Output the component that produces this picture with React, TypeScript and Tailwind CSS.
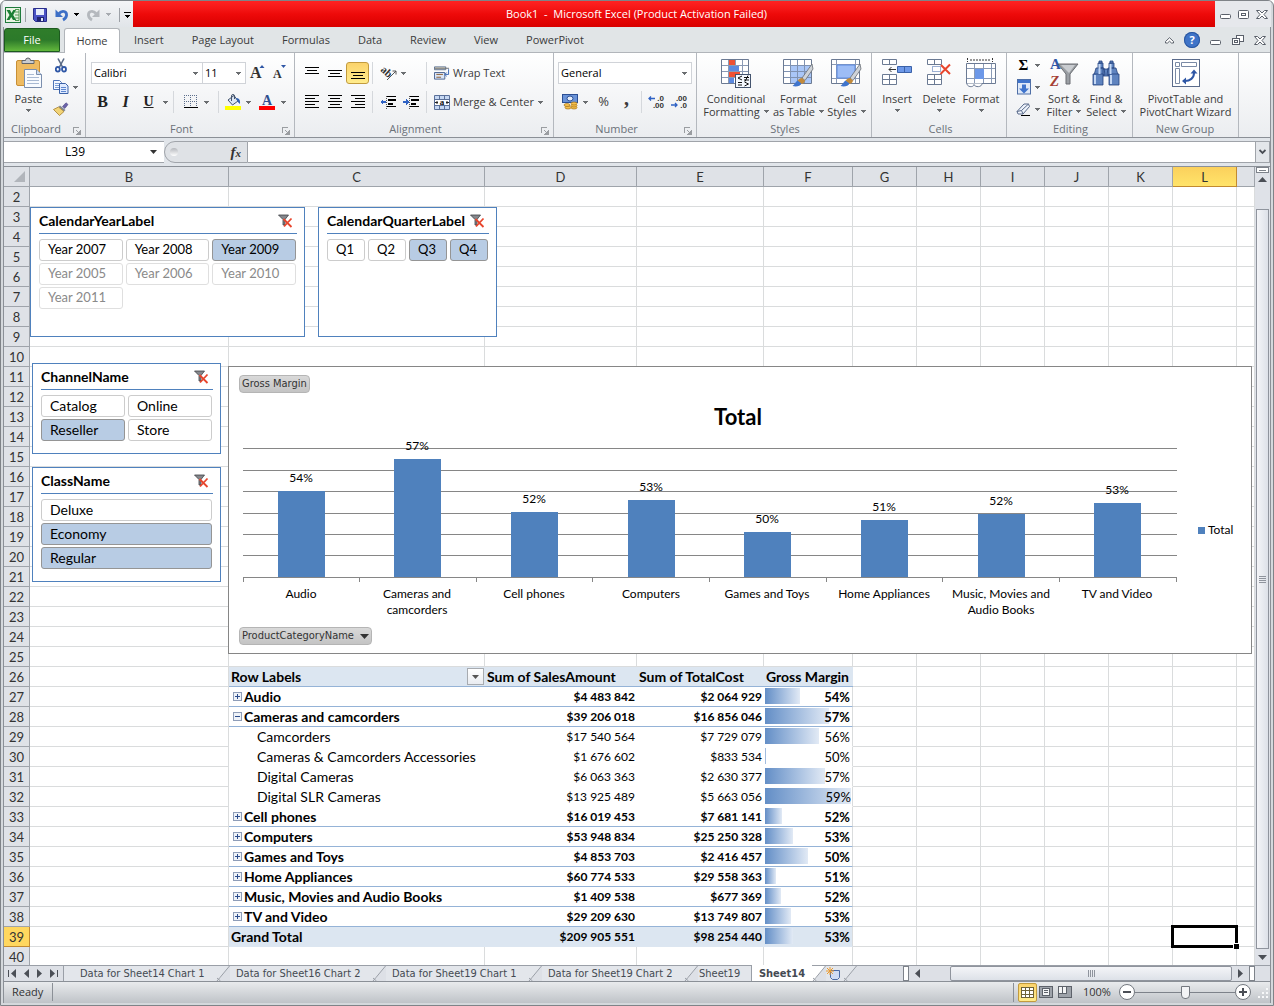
import React from 'react';

const UI = 'font-["Open_Sans","Noto_Sans",sans-serif]';
const SHEET = 'font-[Lato,"Open_Sans",sans-serif]';
const TAHOMA = 'font-["DejaVu_Sans_Condensed","DejaVu_Sans",sans-serif]';

/* ---------- data ---------- */

const columns = [
  { name: 'B', width: 'w-[199px]' },
  { name: 'C', width: 'w-[256px]' },
  { name: 'D', width: 'w-[152px]' },
  { name: 'E', width: 'w-[127px]' },
  { name: 'F', width: 'w-[89px]' },
  { name: 'G', width: 'w-[64px]' },
  { name: 'H', width: 'w-[64px]' },
  { name: 'I', width: 'w-[64px]' },
  { name: 'J', width: 'w-[64px]' },
  { name: 'K', width: 'w-[64px]' },
  { name: 'L', width: 'w-[64px]' },
  { name: '', width: '' },
];

interface PivotRow {
  label: string;
  sales: string;
  cost: string;
  margin: string;
  bar: number;
  kind: 'closed' | 'open' | 'detail' | 'total';
}

const pivot: Record<number, PivotRow> = {
  27: { label: 'Audio', sales: '$4 483 842', cost: '$2 064 929', margin: '54%', bar: 35, kind: 'closed' },
  28: { label: 'Cameras and camcorders', sales: '$39 206 018', cost: '$16 856 046', margin: '57%', bar: 64, kind: 'open' },
  29: { label: 'Camcorders', sales: '$17 540 564', cost: '$7 729 079', margin: '56%', bar: 54, kind: 'detail' },
  30: { label: 'Cameras & Camcorders Accessories', sales: '$1 676 602', cost: '$833 534', margin: '50%', bar: 1, kind: 'detail' },
  31: { label: 'Digital Cameras', sales: '$6 063 363', cost: '$2 630 377', margin: '57%', bar: 60, kind: 'detail' },
  32: { label: 'Digital SLR Cameras', sales: '$13 925 489', cost: '$5 663 056', margin: '59%', bar: 86, kind: 'detail' },
  33: { label: 'Cell phones', sales: '$16 019 453', cost: '$7 681 141', margin: '52%', bar: 17, kind: 'closed' },
  34: { label: 'Computers', sales: '$53 948 834', cost: '$25 250 328', margin: '53%', bar: 28, kind: 'closed' },
  35: { label: 'Games and Toys', sales: '$4 853 703', cost: '$2 416 457', margin: '50%', bar: 43, kind: 'closed' },
  36: { label: 'Home Appliances', sales: '$60 774 533', cost: '$29 558 363', margin: '51%', bar: 11, kind: 'closed' },
  37: { label: 'Music, Movies and Audio Books', sales: '$1 409 538', cost: '$677 369', margin: '52%', bar: 16, kind: 'closed' },
  38: { label: 'TV and Video', sales: '$29 209 630', cost: '$13 749 807', margin: '53%', bar: 26, kind: 'closed' },
  39: { label: 'Grand Total', sales: '$209 905 551', cost: '$98 254 440', margin: '53%', bar: 28, kind: 'total' },
};

const chartData = [
  { name: ['Audio'], value: '54%', height: 86 },
  { name: ['Cameras and', 'camcorders'], value: '57%', height: 118 },
  { name: ['Cell phones'], value: '52%', height: 65 },
  { name: ['Computers'], value: '53%', height: 77 },
  { name: ['Games and Toys'], value: '50%', height: 45 },
  { name: ['Home Appliances'], value: '51%', height: 57 },
  { name: ['Music, Movies and', 'Audio Books'], value: '52%', height: 63 },
  { name: ['TV and Video'], value: '53%', height: 74 },
];

const rows = Array.from({ length: 39 }, (_, i) => i + 2);

/* ---------- small pieces ---------- */

const Caret = ({ className = 'text-[#6a6d70]' }: { className?: string }) => (
  <svg width="5" height="3" viewBox="0 0 5 3" className={`shrink-0 ${className}`} shapeRendering="crispEdges">
    <path d="M0 0h5v1H4v1H3v1H2V2H1V1H0z" fill="currentColor" />
  </svg>
);

const Arrow = ({ dir, className = '' }: { dir: 'up' | 'down' | 'left' | 'right'; className?: string }) => {
  const d = { up: 'M0 6 4.500 1 9 6z', down: 'M0 2h9L4.500 7z', left: 'M7 0v9L2 4.500z', right: 'M2 0v9l5-4.500z' }[dir];
  return (
    <svg width="9" height="9" viewBox="0 0 9 9" className={`shrink-0 ${className}`}>
      <path d={d} fill="#4b4f56" />
    </svg>
  );
};

const Sep = () => <div className="mx-[3px] h-[22px] w-px shrink-0 bg-[#d5d8dc]" />;

const Launcher = () => (
  <svg width="8" height="8" viewBox="0 0 8 8" shapeRendering="crispEdges" fill="none" stroke="#9a9da1">
    <path d="M.5 6V.5H6M3 3l3 3M7.500 3v4.500H3M6.500 4v2.500H4" />
  </svg>
);

interface GroupProps {
  label: string;
  width: string;
  launcher?: boolean;
  children: React.ReactNode;
}

const Group = ({ label, width, launcher, children }: GroupProps) => (
  <section aria-label={label} className={`flex h-full shrink-0 flex-col border-r border-[#b4b8be] ${width}`}>
    <div className="flex min-h-0 flex-1">{children}</div>
    <div className="flex h-[15px] items-center text-[#6b7179]">
      <span className={`flex-1 text-center ${launcher ? 'pr-[5px]' : 'pr-px'}`}>{label}</span>
      {launcher && (
        <button aria-label={`${label} settings`} className="pr-[4px] pt-[2px]">
          <Launcher />
        </button>
      )}
    </div>
  </section>
);

interface BigProps {
  icon: React.ReactNode;
  lines: string[];
  width: string;
  caret?: 'below' | 'inline';
}

const BigButton = ({ icon, lines, width, caret }: BigProps) => (
  <button className={`flex flex-col items-center pt-1 leading-[13px] whitespace-nowrap ${width}`}>
    <span className="mb-[3px] flex h-8 items-center">{icon}</span>
    {lines.map((line, i) => (
      <span key={line} className="flex items-center gap-1">
        {line}
        {caret === 'inline' && i === lines.length - 1 && <Caret />}
      </span>
    ))}
    {caret === 'below' && <Caret className="mt-1 text-[#6a6d70]" />}
  </button>
);

const Tool = ({ label, width = 'w-[23px]', active, children }: { label: string; width?: string; active?: boolean; children: React.ReactNode }) => (
  <button
    aria-label={label}
    title={label}
    className={`flex h-[22px] shrink-0 items-center justify-center gap-1 ${width} ${
      active ? 'rounded-[3px] border border-[#c29b3e] bg-linear-to-b from-[#fbd36b] to-[#ffec8c]' : ''
    }`}
  >
    {children}
  </button>
);

const Picker = ({ label, value, width }: { label: string; value: string; width: string }) => (
  <label className={`relative flex h-[22px] items-center border border-[#d0d3d8] bg-white ${width}`}>
    <select aria-label={label} className="h-full w-full appearance-none bg-transparent pl-[2px] text-black outline-none">
      <option>{value}</option>
    </select>
    <Caret className="pointer-events-none absolute right-1 text-[#6a6d70]" />
  </label>
);

/* ---------- icons ---------- */

const ExcelIcon = () => (
  <svg width="16" height="16" viewBox="0 0 16 16">
    <rect x="0.500" y="0.500" width="15" height="15" fill="#e9f3e3" stroke="#1f7a3c" />
    <path d="M10 2.500h4v11h-4M10 5h4M10 8h4M10 11h4" stroke="#4f9a53" fill="none" />
    <path d="M1.500 3h3.500l1.500 3 1.800-3H11L8.200 8l3 5H8L6.200 10 4.500 13H1.500L4.500 8z" fill="#1c7f35" />
  </svg>
);

const SaveIcon = () => (
  <svg width="14" height="14" viewBox="0 0 14 14">
    <path d="M.5.500h13v13h-11l-2-2z" fill="#4a52c4" stroke="#2a2e8c" />
    <path d="M3 1h8v6H3z" fill="#e6ecfb" />
    <path d="M4 9h7v4.500H4z" fill="#20246e" />
    <path d="M8 10h2v3H8z" fill="#dfe4f7" />
  </svg>
);

const UndoIcon = ({ redo }: { redo?: boolean }) => (
  <svg width="13" height="14" viewBox="0 0 13 14" className={redo ? 'scale-x-[-1]' : ''}>
    <path d="M4 5.500C7 2 12 3 11.500 7.500c-.2 2-1.800 3.500-3.500 4.500" fill="none" stroke={redo ? '#b4b8bd' : '#3c6fc6'} strokeWidth="2.800" />
    <path d="M.5 1.500V9H8z" fill={redo ? '#b4b8bd' : '#3c6fc6'} />
  </svg>
);

const PasteIcon = () => (
  <svg width="28" height="32" viewBox="0 0 28 32">
    <rect x="1.500" y="3.500" width="23" height="25" rx="1.500" fill="#eebb62" stroke="#c88f35" />
    <path d="M7 5.500v-2h3.500a2.500 2.500 0 0 1 5 0H19v3H7z" fill="#c9ccd1" stroke="#62666c" />
    <path d="M9.500 12.500h12l5 5v13h-17z" fill="#f8fbff" stroke="#7b8fae" />
    <path d="M21.500 12.500v5h5" fill="#cfdcee" stroke="#7b8fae" />
    <path d="M12 17.500h7M12 20.500h12M12 23.500h12M12 26.500h12" stroke="#a9bad3" />
  </svg>
);

const CutIcon = () => (
  <svg width="12" height="15" viewBox="0 0 12 15">
    <path d="M3 .5 7.500 9M9 .5 4.500 9" stroke="#5b6b86" strokeWidth="1.600" />
    <ellipse cx="2.800" cy="11.300" rx="2" ry="2.300" fill="none" stroke="#2f57a6" strokeWidth="1.800" />
    <ellipse cx="9" cy="11.300" rx="2" ry="2.300" fill="none" stroke="#2f57a6" strokeWidth="1.800" />
  </svg>
);

const CopyIcon = () => (
  <svg width="16" height="14" viewBox="0 0 16 14">
    <path d="M.5.500h6l2 2v7h-8z" fill="#f4f8ff" stroke="#4f75b8" />
    <path d="M2 3.500h4M2 5.500h4M2 7.500h4" stroke="#7d9fd6" />
    <path d="M6.500 3.500h6l2.500 2.500v7.500h-8.500z" fill="#dfeaff" stroke="#3b62a8" />
    <path d="M8 7.500h5M8 9.500h5M8 11.500h5" stroke="#5c86cf" />
  </svg>
);

const BrushIcon = () => (
  <svg width="16" height="14" viewBox="0 0 16 14">
    <path d="M9.500 4.500 13 .8l2 1.700-3.200 4z" fill="#6a62a8" stroke="#4c4787" strokeWidth=".6" />
    <path d="M7 3.500 12.500 8 11 9.500 5.500 5z" fill="#7f8691" />
    <path d="M5.500 5 .5 7.500l6 6L11 9.500z" fill="#f2d477" stroke="#a57e2c" strokeWidth=".8" />
  </svg>
);

const Lines = ({ widths, align }: { widths: number[]; align: 'left' | 'center' | 'right' }) => (
  <svg width="14" height={3 * widths.length} shapeRendering="crispEdges">
    {widths.map((w, i) => (
      <rect key={i} x={align === 'left' ? 0 : align === 'center' ? (14 - w) / 2 : 14 - w} y={i * 3} width={w} height="1" />
    ))}
  </svg>
);

/* vertical alignment icons have three full rules, four pixels of text height */
const VLines = () => (
  <svg width="14" height="7" shapeRendering="crispEdges">
    <path d="M0 0h14v1H0zM2 3h10v1H2zM0 6h14v1H0z" />
  </svg>
);

const IndentIcon = ({ inc }: { inc?: boolean }) => (
  <svg width="16" height="14" viewBox="0 0 16 14" shapeRendering="crispEdges">
    <path d="M7 1h9v1H7zM8 4h8v2H8zM8 8h5v2H8zM7 11h9v1H7z" />
    <path d="M6 .5v14" stroke="#555" strokeDasharray="1 1" />
    <path d={inc ? 'M0 6h3V4l3 3-3 3V8H0z' : 'M6 6H3V4L0 7l3 3V8h3z'} fill="#2f62c4" />
  </svg>
);

const OrientIcon = () => (
  <svg width="16" height="16" viewBox="0 0 16 16" className="overflow-visible">
    <text x="0" y="9" fontSize="11" transform="rotate(42 4 6)" fontFamily="Liberation Serif, serif" fontWeight="bold" fill="#333">ab</text>
    <path d="M6 15 15 6M11.500 6H15v3.500" fill="none" stroke="#555" />
  </svg>
);

const WrapIcon = () => (
  <svg width="16" height="16" viewBox="0 0 17 16" fill="none">
    <path d="M.5 1.500h12v3H.5z" stroke="#5b6f8f" fill="#f5ead0" />
    <path d="M1 3h15" stroke="#6a6d72" />
    <path d="M.5 7.500h11v7H.5z" fill="#dbe6f7" stroke="#4a6290" />
    <path d="M2.500 9.500h7M2.500 12.500h5" stroke="#8a5a2c" />
    <path d="M15.500 4v5.500H12M13.500 7.500l-2 2 2 2" stroke="#2f5fb3" />
  </svg>
);

const MergeIcon = () => (
  <svg width="16" height="15" viewBox="0 0 16 15" fill="none">
    <path d="M.5.500h15v14H.5z" fill="#c6d8f3" stroke="#5a7099" />
    <path d="M.5 4.500h15M.5 10.500h15M5.500.500v4M10.500.500v4M5.500 10.500v4M10.500 10.500v4" stroke="#5a7099" />
    <path d="M1 5h14v5H1z" fill="#fff" />
    <text x="8" y="10" textAnchor="middle" fontSize="9" fontWeight="bold" fontFamily="Liberation Serif, serif" fill="#111">a</text>
    <path d="M1 7.500h3M12 7.500h3M3 6v3M13 6v3" stroke="#222" />
  </svg>
);

const BordersIcon = () => (
  <svg width="14" height="14" viewBox="0 0 14 14" shapeRendering="crispEdges">
    <path d="M.5 0v12M12.500 0v12M6.500 0v12M0 .5h13M0 6.500h13" stroke="#5d6f8d" strokeDasharray="1 1" />
    <path d="M0 12.500h14" stroke="#000" />
  </svg>
);

const FillIcon = () => (
  <svg width="17" height="16" viewBox="0 0 17 16">
    <path d="M3 6 9 1.500 13 7 7.500 11z" fill="#dce6f3" stroke="#44546e" />
    <path d="M6.500 7V2a1.500 1.500 0 0 1 3 0v3" fill="none" stroke="#44546e" />
    <path d="M11 4c3 0 4.500 2 4 6-1-1-2.500-2-3-4z" fill="#2f62b4" />
    <rect x="0" y="12" width="16" height="4" fill="#ff0" />
  </svg>
);

const FontColorIcon = () => (
  <svg width="16" height="16" viewBox="0 0 16 16">
    <text x="8" y="11" textAnchor="middle" fontSize="14" fontWeight="bold" fontFamily="Liberation Serif, serif" fill="#2f4f8f">A</text>
    <rect x="0" y="12" width="16" height="4" fill="#f00" />
  </svg>
);

const MoneyIcon = () => (
  <svg width="17" height="16" viewBox="0 0 17 16">
    <rect x=".5" y=".5" width="15" height="8" fill="#6a93d8" stroke="#2c4f94" />
    <ellipse cx="8" cy="4.500" rx="3" ry="2.500" fill="#e3ecfa" stroke="#2c4f94" />
    <g fill="#f6c04e" stroke="#a8761a" strokeWidth=".7">
      <ellipse cx="12" cy="13.500" rx="3" ry="1.500" />
      <ellipse cx="12" cy="11.500" rx="3" ry="1.500" />
      <ellipse cx="12" cy="9.500" rx="3" ry="1.500" />
      <ellipse cx="6" cy="13.500" rx="3" ry="1.500" />
      <ellipse cx="5" cy="11" rx="3" ry="1.500" />
    </g>
  </svg>
);

const DecimalIcon = ({ less }: { less?: boolean }) => (
  <svg width="17" height="16" viewBox="0 0 17 16" fontSize="8" fontWeight="bold" fontFamily="Liberation Sans, sans-serif" className="shrink-0">
    <text x="16" y="7" textAnchor="end" fill="#333">{less ? '.00' : '.0'}</text>
    <text x="16" y="14" textAnchor="end" fill="#333">{less ? '.0' : '.00'}</text>
    <path d={less ? 'M0 11h6M4 9l2 2-2 2' : 'M7 4.500H1M3 2.500l-2 2 2 2'} fill="none" stroke="#2f62c4" strokeWidth="1.300" />
  </svg>
);

const ConditionalIcon = () => (
  <svg width="30" height="30" viewBox="0 0 30 30">
    <path d="M.5 1.500h27v24H.5z" fill="#fff" stroke="#6b7a93" />
    <path d="M7.500 2v23M14.500 2v23M21.500 2v23M1 7.500h26M1 13.500h26M1 19.500h26" stroke="#8a9ab5" />
    <path d="M8 2h6v5H8zM8 14h11v5H8z" fill="#ee5134" />
    <path d="M8 8h10v5H8zM8 20h5v5H8z" fill="#5c8ae0" />
    <rect x="14.500" y="16.500" width="15" height="13" fill="#f5f9ff" stroke="#44546e" />
    <path d="m21 18-4 2 4 2M17 24.500h4M17 27h4M23 19.500h5M23 22h5M27 17.500l-3 6M23.500 24l4 2-4 2" fill="none" stroke="#111" />
  </svg>
);

const Brush = () => (
  <>
    <path d="M29 6 19 20l3 2.500L30 11z" fill="#cfd3d8" stroke="#676c74" strokeWidth=".8" />
    <path d="M19 20c-2 0-4 1.500-4.500 3l4 3c2-.5 3.500-2 3.500-3.500z" fill="#c28a3b" />
    <path d="M14.500 22.500c-2 1.500-3 4-5 5.500 4 1 8 0 9-2.500z" fill="#3f74cc" />
  </>
);

const FormatTableIcon = () => (
  <svg width="31" height="30" viewBox="0 0 31 30">
    <path d="M.5 1.500h28v24H.5z" fill="#fff" stroke="#6b7a93" />
    <path d="M8 8h20v17H8z" fill="#a9c6f7" />
    <path d="M7.500 2v23M14.500 2v23M21.500 2v23M1 7.500h27M1 13.500h27M1 19.500h27" stroke="#7f92b2" />
    <Brush />
  </svg>
);

const CellStylesIcon = () => (
  <svg width="31" height="30" viewBox="0 0 31 30">
    <path d="M.5 1.500h28v24H.5z" fill="#fff" stroke="#6b7a93" />
    <path d="M5.500 2v23M24.500 2v23M1 6.500h27M1 20.500h27" stroke="#8a9ab5" />
    <path d="M6 7h18v13H6z" fill="#9dbdf6" stroke="#5c8ae0" />
    <Brush />
  </svg>
);

const InsertIcon = () => (
  <svg width="31" height="30" viewBox="0 0 31 30" fill="#fff" stroke="#6b7a93">
    <path d="M.5 1.500h14v5H.5zM7.500 1.500v5M.5 16.500h14v10H.5zM.5 21.500h14M7.500 16.500v10" />
    <path d="M15.500 8.500h14v6h-14z" fill="#6d98e8" stroke="#3b62a8" />
    <path d="M22.500 8.500v6" stroke="#3b62a8" />
    <path d="M14 11.500H7M9.500 9 7 11.500 9.500 14" fill="none" stroke="#333" />
  </svg>
);

const DeleteIcon = () => (
  <svg width="25" height="30" viewBox="0 0 25 30" fill="#fff" stroke="#6b7a93">
    <path d="M.5 1.500h14v5H.5zM7.500 1.500v5M.5 16.500h14v10H.5zM.5 21.500h14M7.500 16.500v10" />
    <path d="M5.500 8.500h8v5h-8z" stroke="#3b62a8" strokeDasharray="1 1" />
    <path d="m14 7 9 9M23 6.500 13.500 16" stroke="#e8452c" strokeWidth="2" fill="none" />
  </svg>
);

const FormatIcon = () => (
  <svg width="31" height="31" viewBox="0 0 31 31" fill="none">
    <path d="M1.500 0v4M26.500 0v4M4 2h20" stroke="#333" strokeDasharray="2 1" />
    <path d="M.5 5.500h29v20H.5z" fill="#fff" stroke="#6b7a93" />
    <path d="M8.500 6v19M17.500 6v19M25.500 6v19M1 10.500h28M1 20.500h28" stroke="#8a9ab5" />
    <path d="M9 11h9v10H9z" fill="#6d98e8" />
    <path d="M1 25.500c0 4 7 4 7 1 1 3 8 3 8-1" fill="#fff" stroke="#6b7a93" />
  </svg>
);

const FillDownIcon = () => (
  <svg width="14" height="16" viewBox="0 0 14 16">
    <rect x=".5" y=".5" width="13" height="14.500" fill="#dfe9f8" stroke="#4f6fa6" />
    <path d="M1 1h12v3H1z" fill="#3f74cc" />
    <path d="M5 5.500h4v4h3l-5 5-5-5h3z" fill="#3f74cc" />
  </svg>
);

const EraserIcon = () => (
  <svg width="15" height="13" viewBox="0 0 15 13">
    <path d="M1 8.500 8 1h4.500l1 2.500L7 11H2z" fill="#eef3fb" stroke="#5a6b8b" />
    <path d="M1 8.500 5.500 7.500 12.500 1M5.500 7.500 7 11" fill="none" stroke="#5a6b8b" />
    <path d="M5 12.500h9" stroke="#000" />
  </svg>
);

const SortIcon = () => (
  <svg width="30" height="30" viewBox="0 0 30 30" fontFamily="Liberation Serif, serif" fontWeight="bold" className="overflow-visible">
    <path d="M9 6h20l-8 10v10h-4V16z" fill="#9a9ea3" stroke="#6a6d72" />
    <path d="M12 7h14l-6 8z" fill="#c9ccd0" />
    <text x="1" y="11" fontSize="15" fill="#2f57a6">A</text>
    <text x="1" y="28" fontSize="15" fontStyle="italic" fill="#a53f34">Z</text>
  </svg>
);

const FindIcon = () => (
  <svg width="28" height="26" viewBox="0 0 28 26">
    <g fill="#5e83bf" stroke="#24437d" strokeWidth=".8">
      <path d="M6 3h5v5H6zM17 3h5v5h-5zM4 8h8l1 7H2zM16 8h8l2 7H15zM11 9h6v7h-6z" />
      <path d="M1 14h10v11H1zM17 14h10v11H17z" />
      <path d="M7 1h3v2H7zM18 1h3v2h-3z" />
    </g>
    <path d="M3 15v9M19 15v9M7.500 4v10M18.500 4v10" stroke="#c3d7f4" strokeWidth="2" />
  </svg>
);

const PivotIcon = () => (
  <svg width="28" height="28" viewBox="0 0 28 28" fill="none">
    <rect x=".5" y=".5" width="27" height="27" fill="#fff" stroke="#5a6b8b" />
    <path d="M3.500 3.500h4v4h-4zM9.500 3.500h15v4h-15zM3.500 9.500h4v15h-4z" stroke="#7a8aa5" />
    <path d="M13 22c5 0 9-3 9-8" stroke="#2f57a6" strokeWidth="2" />
    <path d="M18.500 14.500 22 10.500l3.500 4zM14 18.500 10 22l4 3.500z" fill="#2f57a6" />
  </svg>
);

const ClearFilterIcon = () => (
  <svg width="15" height="14" viewBox="0 0 15 14">
    <path d="M.5 1h10L7 5.500V11H5V5.500z" fill="#85888d" stroke="#3d4045" strokeWidth=".8" />
    <path d="m5.500 5 8 8M13.500 4.500 6 12.500" stroke="#e8452c" strokeWidth="1.800" />
  </svg>
);

const WindowIcon = ({ kind }: { kind: 'min' | 'max' | 'restore' | 'close' }) => (
  <svg width="12" height="11" viewBox="0 0 12 11" fill="#fff" stroke="#5a606a">
    {kind === 'min' && <rect x=".5" y="5.500" width="10" height="4" rx="1" />}
    {kind === 'max' && (
      <>
        <rect x=".5" y="1.500" width="10" height="8" rx="1" />
        <rect x="3.500" y="4.500" width="4" height="2" />
      </>
    )}
    {kind === 'restore' && (
      <>
        <rect x="4.500" y=".5" width="7" height="6" />
        <rect x=".5" y="3.500" width="7" height="6" />
        <rect x="2.500" y="5.500" width="3" height="2" />
      </>
    )}
    {kind === 'close' && <path d="M.5 1.500h3L6 4l2.500-2.500h3L8 5.500l3.500 4h-3L6 7 3.500 9.500h-3L4 5.500z" />}
  </svg>
);

/* ---------- title bar and tabs ---------- */

const TitleBar = () => (
  <header className="flex h-[26px] shrink-0">
    <div className="flex w-[130px] items-center bg-linear-to-b from-[#f4f5f7] to-[#e1e5e9] pt-px pl-[2px]">
      <ExcelIcon />
      <div className="ml-1 h-[14px] w-px bg-[#9ca0a6]" />
      <button aria-label="Save" className="ml-[7px]"><SaveIcon /></button>
      <button aria-label="Undo" className="ml-2"><UndoIcon /></button>
      <Caret className="ml-[6px] text-black" />
      <button aria-label="Redo" className="ml-2"><UndoIcon redo /></button>
      <Caret className="ml-[6px] text-[#a7abb0]" />
      <div className="ml-2 h-[14px] w-px bg-[#9ca0a6]" />
      <button aria-label="Customize toolbar" className="ml-1 flex flex-col items-center gap-[2px]">
        <span className="h-px w-[7px] bg-black" />
        <Caret className="text-black" />
      </button>
    </div>
    <h1 className="flex flex-1 items-center justify-center whitespace-pre bg-linear-to-b from-[#ff2222] via-[#ee0a0a] via-50% to-[#d90000] pr-[75px] text-white">
      Book1  -  Microsoft Excel (Product Activation Failed)
    </h1>
    <div className="flex w-[56px] items-center gap-[6px] bg-[#e6e8ec] pl-[5px]">
      <button aria-label="Minimize"><WindowIcon kind="min" /></button>
      <button aria-label="Maximize"><WindowIcon kind="max" /></button>
      <button aria-label="Close"><WindowIcon kind="close" /></button>
    </div>
  </header>
);

const tabs = ['Insert', 'Page Layout', 'Formulas', 'Data', 'Review', 'View', 'PowerPivot'];

const RibbonTabs = () => (
  <nav className="flex h-[25px] shrink-0 items-end bg-[#e1e5e7] text-[#3b3b3b]">
    <button className="h-6 w-14 rounded-t-[3px] border border-[#1c5a1f] bg-linear-to-b from-[#2f7d2a] via-[#2c7a2a] to-[#62b83c] text-white">File</button>
    <button className="relative z-10 -mb-px ml-1 h-[25px] w-[56px] rounded-t-[3px] border border-b-0 border-[#b1b5ba] bg-white">Home</button>
    {tabs.map((tab) => (
      <button key={tab} className="h-6 px-[14px]">{tab}</button>
    ))}
    <div className="ml-auto flex h-6 items-center gap-[10px] pr-1">
      <button aria-label="Collapse ribbon">
        <svg width="9" height="7" viewBox="0 0 9 7"><path d="M.5 4.500 4.500.700l4 3.800v1.500H6.500l-2-1.800-2 1.800h-2z" fill="#fff" stroke="#5a606a" /></svg>
      </button>
      <button aria-label="Help" className="flex size-4 items-center justify-center rounded-full bg-[#3f74c8] font-bold text-white ring-1 ring-[#2b579f] ring-inset">?</button>
      <button aria-label="Minimize workbook"><WindowIcon kind="min" /></button>
      <button aria-label="Restore workbook"><WindowIcon kind="restore" /></button>
      <button aria-label="Close workbook"><WindowIcon kind="close" /></button>
    </div>
  </nav>
);

/* ---------- ribbon ---------- */

const Ribbon = () => (
  <div className="flex h-[86px] shrink-0 border-t border-b border-t-[#b1b5ba] border-b-[#8b9097] bg-linear-to-b from-white to-[#ebedf0] text-[#3b3b3b]">
    <Group label="Clipboard" width="w-[82px]" launcher>
      <BigButton icon={<PasteIcon />} lines={['Paste']} width="w-[49px]" caret="below" />
      <div className="flex flex-col pt-px">
        <Tool label="Cut" width="w-4"><CutIcon /></Tool>
        <Tool label="Copy" width="w-[25px]"><CopyIcon /><Caret /></Tool>
        <Tool label="Format Painter" width="w-4"><BrushIcon /></Tool>
      </div>
    </Group>

    <Group label="Font" width="w-[209px]" launcher>
      <div className="flex flex-col gap-[7px] pt-[9px] pl-[5px]">
        <div className="flex">
          <Picker label="Font name" value="Calibri" width="w-[112px]" />
          <Picker label="Font size" value="11" width="-ml-px w-[44px]" />
          <Tool label="Grow font">
            <svg width="15" height="18" viewBox="0 0 15 18" className="overflow-visible">
              <text x="0" y="14" fontSize="16" fontWeight="bold" fontFamily="Liberation Serif, serif" fill="#333">A</text>
              <path d="m9.500 4 2.500-3 2.500 3z" fill="#2f57a6" />
            </svg>
          </Tool>
          <Tool label="Shrink font" width="w-[20px]">
            <svg width="13" height="18" viewBox="0 0 13 18" className="overflow-visible">
              <text x="0" y="14" fontSize="12" fontWeight="bold" fontFamily="Liberation Serif, serif" fill="#333">A</text>
              <path d="m8 1 2.500 3L13 1z" fill="#2f57a6" />
            </svg>
          </Tool>
        </div>
        <div className="flex font-['Liberation_Serif',serif] text-base text-[#222]">
          <Tool label="Bold"><b>B</b></Tool>
          <Tool label="Italic"><b className="italic">I</b></Tool>
          <Tool label="Underline"><b className="text-sm underline">U</b></Tool>
          <Tool label="Underline style" width="w-[10px]"><Caret /></Tool>
          <Sep />
          <Tool label="Borders" width="w-[38px]"><span className="flex items-center gap-[6px]"><BordersIcon /><Caret /></span></Tool>
          <Sep />
          <Tool label="Fill color" width="w-[32px]"><FillIcon /><Caret /></Tool>
          <Tool label="Font color" width="w-[36px]"><span className="flex items-center gap-[6px]"><FontColorIcon /><Caret /></span></Tool>
        </div>
      </div>
    </Group>

    <Group label="Alignment" width="w-[259px]" launcher>
      <div className="flex flex-col gap-[7px] pt-[9px] pl-[5px]">
        <div className="flex">
          <Tool label="Top align"><span className="mb-[5px]"><VLines /></span></Tool>
          <Tool label="Middle align"><VLines /></Tool>
          <Tool label="Bottom align" active><span className="mt-[5px]"><VLines /></span></Tool>
          <Sep />
          <Tool label="Orientation" width="w-[34px]"><OrientIcon /><Caret /></Tool>
          <div className="w-[13px]" />
          <Sep />
          <Tool label="Wrap Text" width="ml-[4px]"><span className="flex items-center gap-[3px]"><WrapIcon />Wrap Text</span></Tool>
        </div>
        <div className="flex">
          <Tool label="Align left"><Lines widths={[14, 10, 14, 10, 14]} align="left" /></Tool>
          <Tool label="Center"><Lines widths={[14, 10, 14, 10, 14]} align="center" /></Tool>
          <Tool label="Align right"><Lines widths={[14, 10, 14, 10, 14]} align="right" /></Tool>
          <Sep />
          <Tool label="Decrease indent"><IndentIcon /></Tool>
          <Tool label="Increase indent" width="w-[24px]"><IndentIcon inc /></Tool>
          <Sep />
          <Tool label="Merge & Center" width="ml-[4px]"><span className="flex items-center gap-[3px]"><MergeIcon />Merge &amp; Center</span><Caret /></Tool>
        </div>
      </div>
    </Group>

    <Group label="Number" width="w-[143px]" launcher>
      <div className="flex flex-col gap-[7px] pt-[9px] pl-[4px]">
        <Picker label="Number format" value="General" width="w-[134px]" />
        <div className="flex">
          <Tool label="Accounting format" width="w-[34px]"><MoneyIcon /><Caret /></Tool>
          <Tool label="Percent style"><span className="text-[13px]">%</span></Tool>
          <Tool label="Comma style"><b className="mb-2 font-['Liberation_Serif',serif] text-[20px] leading-4">,</b></Tool>
          <Sep />
          <Tool label="Increase decimal"><DecimalIcon /></Tool>
          <Tool label="Decrease decimal"><DecimalIcon less /></Tool>
        </div>
      </div>
    </Group>

    <Group label="Styles" width="w-[175px] pl-[3px]">
      <BigButton icon={<ConditionalIcon />} lines={['Conditional', 'Formatting']} width="w-[72px]" caret="inline" />
      <BigButton icon={<FormatTableIcon />} lines={['Format', 'as Table']} width="w-[53px]" caret="inline" />
      <BigButton icon={<CellStylesIcon />} lines={['Cell', 'Styles']} width="w-[43px]" caret="inline" />
    </Group>

    <Group label="Cells" width="w-[135px] pl-1">
      <BigButton icon={<InsertIcon />} lines={['Insert']} width="w-[42px]" caret="below" />
      <BigButton icon={<DeleteIcon />} lines={['Delete']} width="w-[42px]" caret="below" />
      <BigButton icon={<FormatIcon />} lines={['Format']} width="w-[42px]" caret="below" />
    </Group>

    <Group label="Editing" width="w-[126px] pl-[3px]">
      <div className="flex w-[33px] flex-col pt-px pl-1">
        <Tool label="AutoSum" width="w-[28px]"><b className="w-[15px] font-['Liberation_Serif',serif] text-[15px] text-black">Σ</b><Caret /></Tool>
        <Tool label="Fill" width="w-[28px]"><FillDownIcon /><Caret /></Tool>
        <Tool label="Clear" width="w-[28px]"><EraserIcon /><Caret /></Tool>
      </div>
      <BigButton icon={<SortIcon />} lines={['Sort &', 'Filter']} width="w-[42px]" caret="inline" />
      <BigButton icon={<FindIcon />} lines={['Find &', 'Select']} width="w-[42px]" caret="inline" />
    </Group>

    <Group label="New Group" width="w-[106px]">
      <BigButton icon={<PivotIcon />} lines={['PivotTable and', 'PivotChart Wizard']} width="w-full" />
    </Group>
  </div>
);

const FormulaBar = () => (
  <div className="flex h-7 shrink-0 bg-[#e1e5ea] py-[3px]">
    <div className="flex w-[160px] items-center border-y border-[#a0a4aa] bg-white pr-[7px]">
      <input aria-label="Name box" defaultValue="L39" className="w-full min-w-0 bg-transparent pr-[4px] text-center text-xs text-black outline-none" />
      <button aria-label="Named ranges"><svg width="7" height="4"><path d="M0 0h7L3.500 4z" fill="#333" /></svg></button>
    </div>
    <div className="flex w-[84px] items-center justify-between rounded-l-full border border-[#a0a4aa] bg-[#dfe2e6] pr-[6px] pl-[5px]">
      <span className="size-2 rounded-full bg-linear-to-b from-[#b5b8bd] to-white" />
      <button aria-label="Insert function" className="font-['Liberation_Serif',serif] text-[15px] leading-none font-bold text-[#333] italic">
        f<span className="text-[11px]">x</span>
      </button>
    </div>
    <input aria-label="Formula" className="min-w-0 flex-1 border-y border-[#a0a4aa] bg-white px-1 outline-none" />
    <button aria-label="Expand formula bar" className="flex w-[15px] items-center justify-center border border-[#a0a4aa] bg-[#e3e6ea]">
      <svg width="7" height="6" viewBox="0 0 7 6"><path d="m.5 1 3 3 3-3" fill="none" stroke="#4b4f56" strokeWidth="1.800" /></svg>
    </button>
  </div>
);

/* ---------- worksheet ---------- */

const GRID = 'border-r border-b border-[#dadcdd] p-0';
const MONEY = 'border-b p-0 pt-px pr-[2px] text-right text-xs leading-[18px]';

const PivotCells = ({ row }: { row: PivotRow }) => {
  const line = row.kind === 'closed' || row.kind === 'open' ? 'border-[#95b3d7]' : 'border-transparent';
  const tone = `${line} ${row.kind === 'detail' ? '' : 'font-bold'} ${row.kind === 'total' ? 'bg-[#dce6f1]' : ''}`;
  return (
    <>
      <td className={`border-b p-0 pt-px text-sm leading-[18px] ${tone}`}>
        <div className={`flex items-center gap-[2px] ${row.kind === 'detail' ? 'pl-7' : row.kind === 'total' ? 'pl-[2px]' : 'pl-1'}`}>
          {(row.kind === 'closed' || row.kind === 'open') && (
            <button aria-label={row.kind === 'open' ? `Collapse ${row.label}` : `Expand ${row.label}`} className="mb-[2px] size-[9px] shrink-0">
              <svg width="9" height="9" viewBox="0 0 9 9" shapeRendering="crispEdges">
                <rect x=".5" y=".5" width="8" height="8" fill="#eef2f8" stroke="#8e9db8" />
                <path d={row.kind === 'open' ? 'M2 4h5v1H2z' : 'M2 4h2V2h1v2h2v1H5v2H4V5H2z'} fill="#2b4c8c" />
              </svg>
            </button>
          )}
          {row.label}
        </div>
      </td>
      <td className={`${MONEY} ${tone}`}>{row.sales}</td>
      <td className={`${MONEY} ${tone}`}>{row.cost}</td>
      <td className={`border-r border-b border-r-[#dadcdd] p-0 pt-px ${tone}`}>
        <div className="grid pr-[2px] pl-px">
          <span className="col-start-1 row-start-1 h-4 bg-linear-to-r from-[#638ec6] to-[#e2eaf5]" style={{ width: row.bar }} />
          <span className="z-[1] col-start-1 row-start-1 text-right">{row.margin}</span>
        </div>
      </td>
    </>
  );
};

const PivotHeader = () => {
  const cell = 'border-b border-[#95b3d7] bg-[#dce6f1] p-0 pl-[2px] text-left text-sm leading-[18px] font-bold';
  return (
    <>
      <th className={cell}>
        <div className="flex h-[19px] items-center justify-between pr-px">
          Row Labels
          <button aria-label="Filter row labels" className="flex h-[17px] w-[17px] items-center justify-center border border-[#a7abb0] bg-linear-to-b from-white to-[#e9ecf1]">
            <svg width="7" height="4"><path d="M0 0h7L3.500 4z" fill="#555" /></svg>
          </button>
        </div>
      </th>
      <th className={cell}>Sum of SalesAmount</th>
      <th className={cell}>Sum of TotalCost</th>
      <th className={cell}>Gross Margin</th>
    </>
  );
};

const Grid = () => (
  <table className={`w-full table-fixed border-separate border-spacing-0 text-[13px] leading-[18px] whitespace-nowrap text-black ${SHEET}`}>
    <colgroup>
      <col className="w-[26px]" />
      {columns.map((c) => <col key={c.name} className={c.width} />)}
    </colgroup>
    <thead>
      <tr>
        <th className="h-5 border-r border-b border-[#9fa4ab] bg-[#dfe2e7] p-0">
          <svg width="11" height="11" className="mr-1 ml-auto"><path d="M11 0v11H0z" fill="#b1b5bb" /></svg>
        </th>
        {columns.map((c) => (
          <th
            key={c.name}
            className={`h-5 border-r border-b p-0 pt-px font-normal text-[#333] ${
              c.name === 'L' ? 'border-[#c28a30] bg-linear-to-b from-[#fbd05c] to-[#ffe46a]' : 'border-[#9fa4ab] bg-[#dfe2e7]'
            }`}
          >
            {c.name}
          </th>
        ))}
      </tr>
    </thead>
    <tbody>
      {rows.map((n) => {
        const inPivot = n >= 26 && n <= 39;
        return (
          <tr key={n}>
            <th
              className={`h-5 border-r border-b p-0 pt-px text-center font-normal text-[#333] ${
                n === 39 ? 'border-[#c28a30] bg-[#ffd75f]' : 'border-[#9fa4ab] bg-[#dfe2e7]'
              }`}
            >
              {n}
            </th>
            <td className={GRID} />
            {n === 26 && <PivotHeader />}
            {pivot[n] && <PivotCells row={pivot[n]} />}
            {columns.slice(inPivot ? 5 : 1).map((c) =>
              n === 39 && c.name === 'L' ? (
                <td key={c.name} className={`relative ${GRID}`}>
                  <div className="absolute -top-[2px] -right-[2px] -bottom-[2px] -left-[2px] border-[3px] border-black" />
                  <div className="absolute -right-[3px] -bottom-[3px] size-[6px] border-t border-l border-white bg-black" />
                </td>
              ) : (
                <td key={c.name} className={GRID} />
              ),
            )}
          </tr>
        );
      })}
    </tbody>
  </table>
);

interface SlicerProps {
  title: string;
  items: { text: string; state?: 'on' | 'off' }[];
  box: string;
  cols: string;
}

const Slicer = ({ title, items, box, cols }: SlicerProps) => (
  <section aria-label={title} className={`absolute border border-[#4f81bd] bg-white pr-[7px] pl-2 text-sm text-black ${SHEET} ${box}`}>
    <div className="flex h-[26px] items-center justify-between border-b border-[#4f81bd] pr-[4px]">
      <h2 className="font-bold">{title}</h2>
      <button aria-label={`Clear ${title} filter`}><ClearFilterIcon /></button>
    </div>
    <div className={`mt-[5px] mr-px grid gap-x-[3px] gap-y-[2px] ${cols}`}>
      {items.map((item) => (
        <button
          key={item.text}
          className={`h-[22px] rounded-[3px] border pb-px pl-2 text-left leading-[19px] ${
            item.state === 'on' ? 'border-[#959595] bg-[#b8cce4]' : item.state === 'off' ? 'border-[#dfdfdf] text-[#8a8a8a]' : 'border-[#cccccc]'
          }`}
        >
          {item.text}
        </button>
      ))}
    </div>
  </section>
);

const PILL = `absolute flex h-[18px] items-center rounded-[4px] border border-[#b5b5b5] bg-linear-to-b from-[#d9d9d9] to-[#c4c4c4] px-[2px] text-[11px] text-[#333] ${TAHOMA}`;

const Chart = () => {
  const step = 933 / chartData.length;
  return (
    <figure aria-label="Gross margin by product category" className="absolute top-[199px] left-[224px] h-[288px] w-[1024px] border border-[#868686] bg-white">
      <svg width="1022" height="286" viewBox="229 367 1022 286" fontFamily="Lato, sans-serif" fontSize="12" textAnchor="middle">
        <g stroke="#868686" shapeRendering="crispEdges">
          {[448, 470, 491, 513, 534, 555, 577].map((y) => <path key={y} d={`M243 ${y + 0.5}h934`} />)}
          {Array.from({ length: 9 }, (_, i) => <path key={i} d={`M${Math.floor(243 + i * step) + 0.5} 577v5`} />)}
        </g>
        <text x="738" y="425" fontSize="22" fontWeight="bold">Total</text>
        {chartData.map((d, i) => {
          const mid = Math.floor(243 + step * (i + 0.5));
          return (
            <g key={d.name[0]}>
              <rect x={mid - 23} y={577 - d.height} width="47" height={d.height} fill="#4f81bd" shapeRendering="crispEdges" />
              <text x={mid} y={568 - d.height}>{d.value}</text>
              {d.name.map((line, k) => <text key={line} x={mid} y={598 + k * 16}>{line}</text>)}
            </g>
          );
        })}
        <rect x="1198" y="527" width="7" height="7" fill="#4f81bd" />
        <text x="1208" y="534" textAnchor="start">Total</text>
      </svg>
      <button className={`top-2 left-[10px] ${PILL}`}>Gross Margin</button>
      <button className={`top-[260px] left-[10px] gap-[6px] ${PILL}`}>
        ProductCategoryName
        <svg width="9" height="5"><path d="M0 0h9L4.500 5z" fill="#333" /></svg>
      </button>
    </figure>
  );
};

const Worksheet = () => (
  <main className="flex min-h-0 flex-1 border-t border-[#8b9097]">
    <div className="relative min-w-0 flex-1 overflow-hidden bg-white">
      <Grid />
      <Slicer
        title="CalendarYearLabel"
        box="left-[26px] top-[40px] h-[130px] w-[275px]"
        cols="grid-cols-3 text-[13px]"
        items={[
          { text: 'Year 2007' }, { text: 'Year 2008' }, { text: 'Year 2009', state: 'on' },
          { text: 'Year 2005', state: 'off' }, { text: 'Year 2006', state: 'off' }, { text: 'Year 2010', state: 'off' },
          { text: 'Year 2011', state: 'off' },
        ]}
      />
      <Slicer
        title="CalendarQuarterLabel"
        box="left-[314px] top-[40px] h-[130px] w-[179px]"
        cols="grid-cols-4 text-[13px]"
        items={[{ text: 'Q1' }, { text: 'Q2' }, { text: 'Q3', state: 'on' }, { text: 'Q4', state: 'on' }]}
      />
      <Slicer
        title="ChannelName"
        box="left-[28px] top-[196px] h-[91px] w-[189px]"
        cols="grid-cols-2"
        items={[{ text: 'Catalog' }, { text: 'Online' }, { text: 'Reseller', state: 'on' }, { text: 'Store' }]}
      />
      <Slicer
        title="ClassName"
        box="left-[28px] top-[300px] h-[115px] w-[189px]"
        cols="grid-cols-1"
        items={[{ text: 'Deluxe' }, { text: 'Economy', state: 'on' }, { text: 'Regular', state: 'on' }]}
      />
      <Chart />
    </div>
    <div className="flex w-[15px] shrink-0 flex-col items-center bg-[#dfe2e8]">
      <div className="flex h-[6px] w-[13px] shrink-0 items-center justify-center border border-[#7d828a] bg-white"><span className="h-px w-[7px] bg-[#7d828a]" /></div>
      <button aria-label="Scroll up" className="flex h-[15px] items-center"><Arrow dir="up" /></button>
      <div className="mt-[21px] flex w-[13px] flex-1 flex-col items-center justify-center gap-px border border-[#8f949d] bg-linear-to-r from-[#f4f5f8] to-[#dde1e8]">
        {[0, 1, 2, 3].map((i) => <span key={i} className="h-px w-[7px] bg-[#8f949d]" />)}
      </div>
      <button aria-label="Scroll down" className="flex h-[16px] items-center"><Arrow dir="down" /></button>
    </div>
  </main>
);

/* ---------- bottom ---------- */

const Slant = ({ active }: { active?: boolean }) => (
  <svg width="14" height="15" viewBox="0 0 14 15" className="shrink-0">
    <path d="M0 0h13.500L4.500 11 2 15H0z" fill={active ? '#fff' : '#e3e6eb'} />
    <path d="M13.500 0 4 11.500 1 15M1 12l3.500 3" fill="none" stroke="#9a9fa7" />
  </svg>
);

const sheets = [
  { name: 'Data for Sheet14 Chart 1', width: 'w-[152px] pl-4' },
  { name: 'Data for Sheet16 Chart 2', width: 'w-[142px] pl-[6px]' },
  { name: 'Data for Sheet19 Chart 1', width: 'w-[142px] pl-[6px]' },
  { name: 'Data for Sheet19 Chart 2', width: 'w-[142px] pl-[6px]' },
];

const SheetTabs = () => (
  <div className={`flex h-4 shrink-0 border-t border-[#9a9fa7] bg-[#dde0e6] text-[11px] text-[#444a52] ${TAHOMA}`}>
    <div className="flex w-[60px] items-center justify-between border-r border-[#9a9fa7] pr-[5px] pl-[4px]">
      <button aria-label="First sheet" className="flex items-center"><span className="h-[7px] w-px bg-[#4b4f56]" /><Arrow dir="left" /></button>
      <button aria-label="Previous sheet"><Arrow dir="left" /></button>
      <button aria-label="Next sheet"><Arrow dir="right" /></button>
      <button aria-label="Last sheet" className="flex items-center"><Arrow dir="right" /><span className="h-[7px] w-px bg-[#4b4f56]" /></button>
    </div>
    {sheets.map((s) => (
      <React.Fragment key={s.name}>
        <button className={`bg-[#e3e6eb] text-left leading-[15px] whitespace-nowrap ${s.width}`}>{s.name}</button>
        <Slant />
      </React.Fragment>
    ))}
    <button className="w-[53px] bg-[#e3e6eb] pl-px text-left leading-[15px]">Sheet19</button>
    <button className="-mt-px w-[61px] border-l border-[#9a9fa7] bg-white pt-px text-center leading-[15px] font-bold">Sheet14</button>
    <Slant active />
    <button aria-label="Insert worksheet" className="w-[17px] bg-[#e3e6eb]">
      <svg width="15" height="13" viewBox="0 0 15 13">
        <path d="M4.500 3.500h9v7l-2 2h-5l-2-2z" fill="#cfdcf3" stroke="#4a6aa4" />
        <path d="M4 0v8M0 4h8M1 1l6 6M7 1 1 7" stroke="#eb9a2d" />
      </svg>
    </button>
    <Slant />
    <div className="ml-auto flex items-center">
      <div className="h-full w-[6px] border border-[#7d828a] bg-white" />
      <button aria-label="Scroll left" className="ml-1"><Arrow dir="left" /></button>
      <div className="ml-[28px] flex h-full w-[282px] items-center justify-center gap-px rounded-[2px] border border-[#8f949d] bg-linear-to-b from-[#f4f5f8] to-[#dde1e8]">
        {[0, 1, 2, 3].map((i) => <span key={i} className="h-[7px] w-px bg-[#8f949d]" />)}
      </div>
      <button aria-label="Scroll right" className="ml-1"><Arrow dir="right" /></button>
      <div className="mr-[15px] ml-[4px] h-full w-[6px] border border-[#7d828a] bg-white" />
    </div>
  </div>
);

const StatusBar = () => (
  <footer className="flex h-[22px] shrink-0 items-center border-t border-[#8b9097] bg-linear-to-b from-[#e9ebed] to-[#bfc3c8] pb-px pl-2 text-[#333]">
    <span className="w-10">Ready</span>
    <div className="h-[18px] w-px bg-[#8b9097]" />
    <div className="mr-1 ml-auto h-[19px] w-px bg-[#8b9097]" />
    <button aria-label="Normal view" className="flex h-[19px] w-[19px] items-center justify-center rounded-[2px] border border-[#c29b3e] bg-linear-to-b from-[#fbd36b] to-[#ffec8c]">
      <svg width="13" height="11" viewBox="0 0 13 11" shapeRendering="crispEdges" fill="#fff" stroke="#6d6238"><path d="M.5.500h12v10H.5zM4.500.500v10M8.500.500v10M.5 3.500h12M.5 7.500h12" /></svg>
    </button>
    <button aria-label="Page layout view" className="ml-[2px]">
      <svg width="14" height="12" viewBox="0 0 14 12" shapeRendering="crispEdges" fill="#9ea3aa" stroke="#5d626a"><path d="M.5.500h13v11H.5z" /><path d="M3.500 2.500h7v7h-7zM5 4.500h4M5 6.500h4" fill="#f4f5f6" /></svg>
    </button>
    <button aria-label="Page break preview" className="ml-[5px]">
      <svg width="14" height="12" viewBox="0 0 14 12" shapeRendering="crispEdges" fill="#9ea3aa" stroke="#5d626a"><path d="M.5.500h13v11H.5z" /><path d="M.5.500h4v7h-4zM4.500.500h4v7h-4z" fill="#f4f5f6" /></svg>
    </button>
    <span className="ml-[11px] w-9">100%</span>
    <button aria-label="Zoom out" className="flex size-4 items-center justify-center rounded-full border border-[#73787f] bg-white"><span className="h-[2px] w-2 bg-[#4b4f56]" /></button>
    <input
      type="range"
      aria-label="Zoom"
      defaultValue="50"
      className="h-3 w-[100px] appearance-none bg-[linear-gradient(#7d828a,#7d828a)] bg-[length:100%_1px] bg-center bg-no-repeat [&::-webkit-slider-thumb]:h-[13px] [&::-webkit-slider-thumb]:w-[9px] [&::-webkit-slider-thumb]:appearance-none [&::-webkit-slider-thumb]:rounded-b-[4px] [&::-webkit-slider-thumb]:border [&::-webkit-slider-thumb]:border-[#73787f] [&::-webkit-slider-thumb]:bg-[#f3f4f6]"
    />
    <button aria-label="Zoom in" className="flex size-4 items-center justify-center rounded-full border border-[#73787f] bg-white">
      <svg width="8" height="8"><path d="M3 0h2v3h3v2H5v3H3V5H0V3h3z" fill="#4b4f56" /></svg>
    </button>
    <svg width="19" height="16" viewBox="0 0 19 16" fill="#f7f8f9" shapeRendering="crispEdges"><path d="M15 4h2v2h-2zM15 8h2v2h-2zM11 8h2v2h-2zM15 12h2v2h-2zM11 12h2v2h-2zM7 12h2v2H7z" /></svg>
  </footer>
);

export default function App() {
  return (
    <div className={`flex h-screen flex-col overflow-hidden rounded-t-[6px] border border-[#7f8388] bg-[#d4d8dc] px-[2px] pb-[2px] text-[11px] ${UI}`}>
      <TitleBar />
      <div className="flex min-h-0 flex-1 flex-col border-x border-[#8b9097]">
        <RibbonTabs />
        <Ribbon />
        <FormulaBar />
        <Worksheet />
        <SheetTabs />
        <StatusBar />
      </div>
    </div>
  );
}
